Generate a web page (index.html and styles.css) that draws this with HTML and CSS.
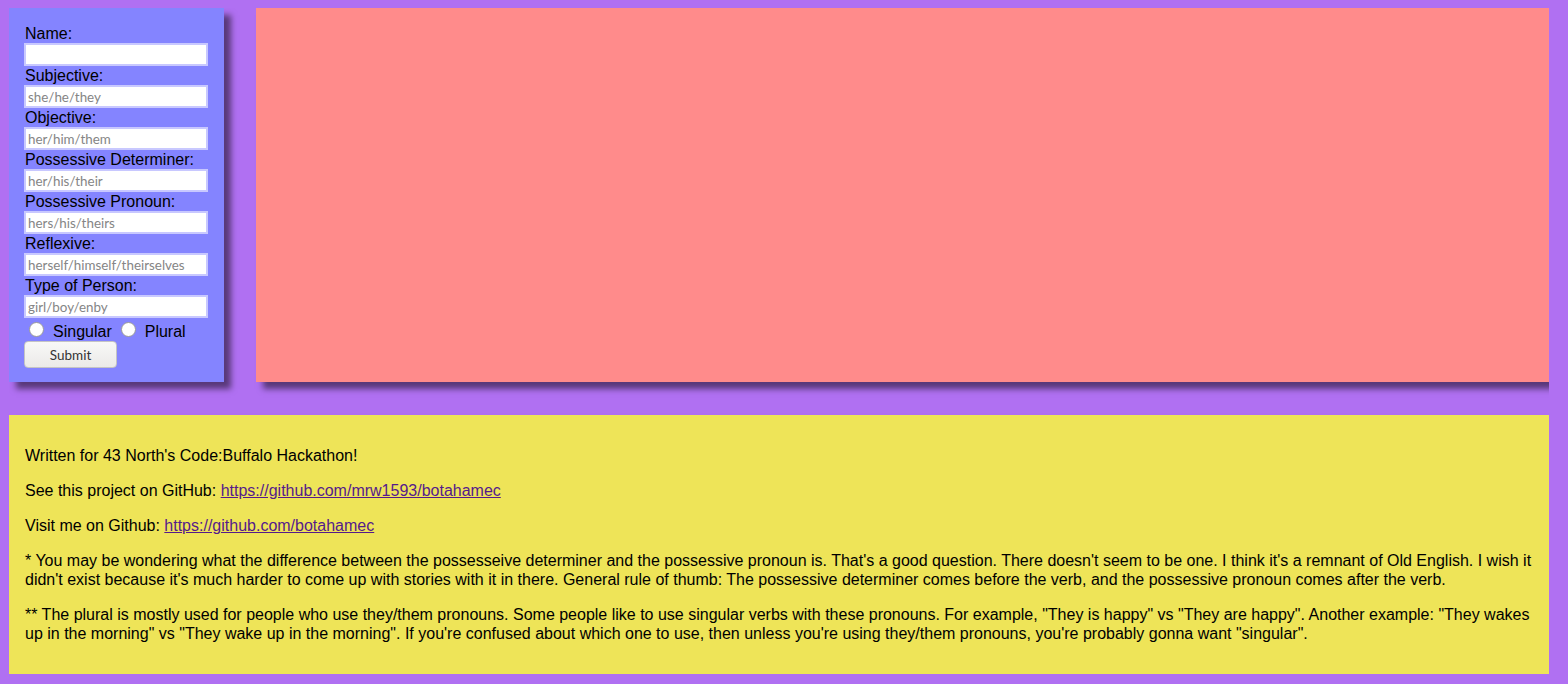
FILE: index.html
```html
<!DOCTYPE html>
<html>
<head>
<meta charset="utf-8">
<title>Botahamec</title>
<link rel="stylesheet" href="styles.css">
</head>
<body>
<div class="top">
  <form class="form-panel">
    <label class="lbl" for="name">Name:</label>
    <input class="field" id="name" type="text">
    <label class="lbl" for="subj">Subjective:</label>
    <input class="field" id="subj" type="text" placeholder="she/he/they">
    <label class="lbl" for="obj">Objective:</label>
    <input class="field" id="obj" type="text" placeholder="her/him/them">
    <label class="lbl" for="pdet">Possessive Determiner:</label>
    <input class="field" id="pdet" type="text" placeholder="her/his/their">
    <label class="lbl" for="ppro">Possessive Pronoun:</label>
    <input class="field" id="ppro" type="text" placeholder="hers/his/theirs">
    <label class="lbl" for="refl">Reflexive:</label>
    <input class="field" id="refl" type="text" placeholder="herself/himself/theirselves">
    <label class="lbl" for="type">Type of Person:</label>
    <input class="field" id="type" type="text" placeholder="girl/boy/enby">
    <div class="radios">
      <input class="radio first" type="radio" name="num" id="sing">
      <label class="rlbl" for="sing">Singular</label>
      <input class="radio" type="radio" name="num" id="plur">
      <label class="rlbl" for="plur">Plural</label>
    </div>
    <button class="submit" type="button">Submit</button>
  </form>
  <div class="story"></div>
</div>
<div class="info">
  <p>Written for 43 North's Code:Buffalo Hackathon!</p>
  <p>See this project on GitHub: <a href="#">https://github.com/mrw1593/botahamec</a></p>
  <p>Visit me on Github: <a href="#">https://github.com/botahamec</a></p>
  <p>* You may be wondering what the difference between the possesseive determiner and the possessive pronoun is. That's a good question. There doesn't seem to be one. I think it's a remnant of Old English. I wish it didn't exist because it's much harder to come up with stories with it in there. General rule of thumb: The possessive determiner comes before the verb, and the possessive pronoun comes after the verb.</p>
  <p>** The plural is mostly used for people who use they/them pronouns. Some people like to use singular verbs with these pronouns. For example, "They is happy" vs "They are happy". Another example: "They wakes up in the morning" vs "They wake up in the morning". If you're confused about which one to use, then unless you're using they/them pronouns, you're probably gonna want "singular".</p>
</div>
</body>
</html>
```
FILE: styles.css
```css
html, body {
  background: #b070f2;
}
body {
  margin: 8px 19px 8px 9px;
  font-family: "Liberation Sans", Arial, sans-serif;
  font-size: 16px;
  color: #000;
}
.top {
  display: flex;
  gap: 32px;
  align-items: stretch;
}
.form-panel {
  width: 215px;
  box-sizing: border-box;
  flex: none;
  background: #8484ff;
  padding: 16px 16px 14px 15px;
  box-shadow: 7px 7px 6px rgba(0, 0, 0, 0.5);
  display: flex;
  flex-direction: column;
  align-items: flex-start;
}
.lbl {
  display: block;
  line-height: 19px;
  height: 19px;
  padding-left: 1px;
}
.field {
  display: block;
  width: 184px;
  height: 23px;
  box-sizing: border-box;
  margin: 0;
  border: 2px solid #c8c8ff;
  background: #fff;
  padding: 1px 2px;
  font-family: Lato, "Noto Sans", sans-serif;
  font-size: 13.4px;
  outline: none;
}
.field::placeholder {
  color: #858585;
}
.radios {
  display: flex;
  align-items: center;
  height: 23px;
}
.radio {
  appearance: none;
  -webkit-appearance: none;
  width: 15px;
  height: 15px;
  margin: 0 9px 0 0;
  border: 1px solid #9a9a9a;
  border-radius: 50%;
  background: #fff;
  box-sizing: border-box;
}
.radio.first {
  margin-left: 5px;
}
.rlbl {
  line-height: 19px;
  margin-right: 9px;
  padding-top: 3px;
}
.submit {
  width: 93px;
  height: 27px;
  margin: 0;
  border: 1px solid #c4c4c4;
  border-radius: 4px;
  background: linear-gradient(#f8f8f7, #ebeae8);
  font-family: Lato, "Noto Sans", sans-serif;
  font-size: 13.5px;
  color: #333;
  padding: 0;
}
.story {
  flex: 1;
  background: #ff8b8b;
  box-shadow: 7px 7px 6px rgba(0, 0, 0, 0.5);
}
.info {
  margin-top: 33px;
  background: #eee458;
  padding: 15px 16px;
  line-height: 19px;
  box-shadow: 7px 7px 6px rgba(0, 0, 0, 0.5);
}
.info p {
  margin: 16px 0;
}
.info a {
  color: #551a8b;
}
```
